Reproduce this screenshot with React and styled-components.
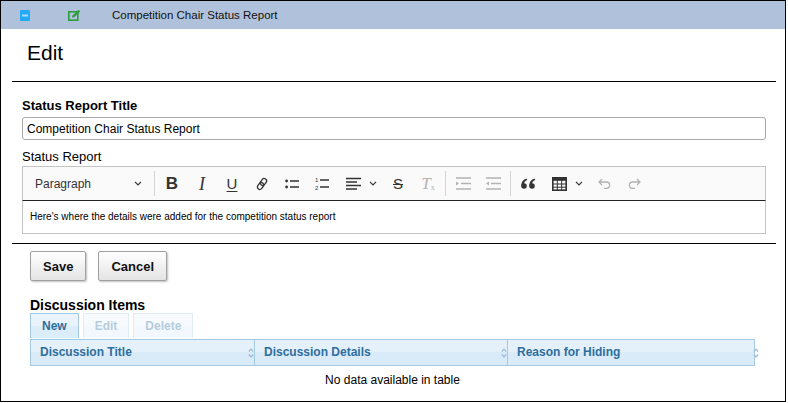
import React from "react";
import styled, { createGlobalStyle } from "styled-components";

const GlobalStyle = createGlobalStyle`
  body {
    margin: 0;
    background: #fff;
    font-family: "Liberation Sans", Arial, sans-serif;
    color: #000;
  }
`;

const Frame = styled.div`
  box-sizing: border-box;
  width: 786px;
  height: 402px;
  border: 1px solid #000;
  overflow: hidden;
  background: #fff;
`;

const TitleBar = styled.div`
  display: flex;
  align-items: center;
  height: 28px;
  padding-left: 19px;
  background: #b0c1dc;
  font-size: 11.5px;
  color: #111;
`;

const BarIcon = styled.svg`
  display: block;
  margin-right: ${(p) => p.$gap}px;
`;

const Body = styled.div`
  padding: 0 9px 0 11px;
`;

const PageTitle = styled.h1`
  margin: 12px 0 0;
  padding-left: 15px;
  font-size: 21px;
  line-height: 24px;
  font-weight: normal;
`;

const Rule = styled.div`
  margin-top: ${(p) => p.$top}px;
  border-top: 1px solid #000;
`;

const Form = styled.div`
  padding: 0 10px;
`;

const Label = styled.div`
  margin-top: ${(p) => p.$top}px;
  font-size: 13px;
  line-height: 16px;
  font-weight: ${(p) => (p.$bold ? "bold" : "normal")};
`;

const TextInput = styled.input`
  display: block;
  box-sizing: border-box;
  width: 100%;
  height: 23px;
  margin-top: 3px;
  padding: 0 4px;
  border: 1px solid #a9a9a9;
  border-radius: 3px;
  font-family: inherit;
  font-size: 12px;
  color: #000;
  outline: none;
`;

const Editor = styled.div`
  margin-top: 1px;
`;

const Toolbar = styled.div`
  display: flex;
  align-items: center;
  box-sizing: border-box;
  height: 35px;
  border: 1px solid #c4c4c4;
  border-bottom-color: #222;
  background: #fafafa;
`;

const Dropdown = styled.div`
  display: flex;
  align-items: center;
  justify-content: space-between;
  box-sizing: border-box;
  width: 129px;
  padding: 0 10px 0 12px;
  font-size: 12px;
  color: #333;
`;

const Separator = styled.div`
  width: 1px;
  height: 25px;
  margin: 0 2px;
  background: #d4d4d4;
`;

const ToolButton = styled.div`
  display: flex;
  align-items: center;
  justify-content: ${(p) => (p.$split ? "flex-start" : "center")};
  gap: ${(p) => (p.$split ? 8 : 0)}px;
  box-sizing: border-box;
  width: ${(p) => p.$width || 30}px;
  padding-left: ${(p) => (p.$split ? 9 : 0)}px;
  height: 26px;
  color: ${(p) => (p.$off ? "#b3b3b3" : "#333")};
`;

const Glyph = styled.span`
  font-family: ${(p) => (p.$serif ? '"Liberation Serif", serif' : '"Liberation Sans", Arial, sans-serif')};
  font-size: ${(p) => p.$size || 17}px;
  font-weight: ${(p) => (p.$bold ? "bold" : "normal")};
  font-style: ${(p) => (p.$italic ? "italic" : "normal")};
  text-decoration: ${(p) => p.$deco || "none"};
  text-decoration-thickness: 1px;
  text-underline-offset: 2px;
  line-height: 1;
`;

const Sub = styled.sub`
  font-size: 8px;
  font-style: normal;
  vertical-align: -1px;
`;

const Content = styled.div`
  box-sizing: border-box;
  height: 33px;
  padding-left: 7px;
  border: 1px solid #c4c4c4;
  border-top: none;
  font-size: 10px;
  line-height: 32px;
`;

const Actions = styled.div`
  display: flex;
  gap: 12px;
  margin-top: 7px;
  padding-left: 18px;
`;

const Button = styled.button`
  height: 30px;
  padding: 0 12px;
  border: 1px solid #a0a0a0;
  border-radius: 2px;
  background: linear-gradient(#ffffff, #e4e4e4);
  box-shadow: 1px 1px 2px rgba(0, 0, 0, 0.25);
  font-family: inherit;
  font-size: 13px;
  font-weight: bold;
  color: #111;
`;

const Section = styled.div`
  padding-left: 18px;
`;

const SectionTitle = styled.h3`
  margin: 16px 0 0;
  font-size: 14px;
  line-height: 16px;
  font-weight: bold;
`;

const DtButtons = styled.div`
  display: flex;
  gap: 4px;
`;

const DtButton = styled.div`
  box-sizing: border-box;
  height: 25px;
  padding: 0 11px;
  border: 1px solid #a6c9e2;
  border-bottom: none;
  background: linear-gradient(#e8f3fc 50%, #dcedfa 50%);
  font-size: 12px;
  font-weight: bold;
  line-height: 25px;
  color: #2e6e9e;
  opacity: ${(p) => (p.$disabled ? 0.35 : 1)};
`;

const Table = styled.div`
  width: 725px;
  margin-top: 1px;
`;

const HeadRow = styled.div`
  display: grid;
  grid-template-columns: 223px 253px 249px;
  box-sizing: border-box;
  height: 27px;
  border: 1px solid #a6c9e2;
  background: linear-gradient(#e4f1fb 50%, #d9ebf9 50%);
`;

const HeadCell = styled.div`
  position: relative;
  padding-left: ${(p) => (p.$first ? 9 : 9)}px;
  border-left: ${(p) => (p.$first ? "none" : "1px solid #a6c9e2")};
  font-size: 12px;
  font-weight: bold;
  line-height: 25px;
  color: #2e6e9e;
`;

const SortMark = styled.svg`
  position: absolute;
  right: ${(p) => (p.$last ? -3 : 0)}px;
  top: 8px;
`;

const EmptyRow = styled.div`
  height: 28px;
  font-size: 12px;
  line-height: 28px;
  text-align: center;
`;

const Chevron = () => (
  <svg width="8" height="5" viewBox="0 0 8 5" fill="none" stroke="#333" strokeWidth="1.2">
    <path d="M1 0.8 L4 3.8 L7 0.8" />
  </svg>
);

const Icon = ({ children, w = 15, h = 15 }) => (
  <svg width={w} height={h} viewBox={`0 0 ${w} ${h}`} fill="none" stroke="currentColor" strokeWidth="1.3">
    {children}
  </svg>
);

const Sort = ({ last }) => (
  <SortMark $last={last} width="6" height="10" viewBox="0 0 6 10" fill="none" stroke="#9bb8d3" strokeWidth="1.2">
    <path d="M0.8 3.5 L3 1.2 L5.2 3.5 M0.8 6.5 L3 8.8 L5.2 6.5" />
  </SortMark>
);

export default function App() {
  return (
    <>
      <GlobalStyle />
      <Frame>
        <TitleBar>
          <BarIcon $gap={38} width="10" height="11" viewBox="0 0 10 11">
            <rect x="0" y="0" width="10" height="11" rx="1" fill="#22a9f8" />
            <rect x="2" y="4.5" width="6" height="2" fill="#a8defc" />
          </BarIcon>
          <BarIcon $gap={31} width="13" height="12" viewBox="0 0 13 12">
            <rect x="0.8" y="2.8" width="9" height="8.4" fill="none" stroke="#2e9c3c" strokeWidth="1.6" />
            <path d="M4 8.5 L4.5 6.5 L10.5 0.8 L12.2 2.5 L6.2 8.2 Z" fill="#2e9c3c" />
          </BarIcon>
          <span>Competition Chair Status Report</span>
        </TitleBar>

        <Body>
          <PageTitle>Edit</PageTitle>
          <Rule $top={16} />

          <Form>
            <Label $top={16} $bold>Status Report Title</Label>
            <TextInput defaultValue="Competition Chair Status Report" />

            <Label $top={9}>Status Report</Label>
            <Editor>
              <Toolbar>
                <Dropdown>
                  <span>Paragraph</span>
                  <Chevron />
                </Dropdown>
                <Separator />
                <ToolButton><Glyph $bold $size={17}>B</Glyph></ToolButton>
                <ToolButton><Glyph $serif $italic $size={18}>I</Glyph></ToolButton>
                <ToolButton><Glyph $size={15} $deco="underline">U</Glyph></ToolButton>
                <ToolButton>
                  <Icon w={14} h={14}>
                    <g transform="rotate(-55 7 7)">
                      <rect x="0.8" y="4.6" width="7.4" height="4.8" rx="2.4" />
                      <rect x="5.8" y="4.6" width="7.4" height="4.8" rx="2.4" />
                    </g>
                  </Icon>
                </ToolButton>
                <ToolButton>
                  <Icon w={14} h={12}>
                    <circle cx="1.6" cy="3" r="1.4" fill="currentColor" stroke="none" />
                    <circle cx="1.6" cy="9" r="1.4" fill="currentColor" stroke="none" />
                    <path d="M5 3 H14 M5 9 H14" strokeWidth="1.5" />
                  </Icon>
                </ToolButton>
                <ToolButton>
                  <Icon w={14} h={13}>
                    <text x="0" y="5" fontSize="6" fontFamily="Liberation Sans, Arial, sans-serif" fill="currentColor" stroke="none">1</text>
                    <text x="0" y="12.5" fontSize="6" fontFamily="Liberation Sans, Arial, sans-serif" fill="currentColor" stroke="none">2</text>
                    <path d="M5 3 H14 M5 10 H14" strokeWidth="1.5" />
                  </Icon>
                </ToolButton>
                <ToolButton $split $width={46}>
                  <Icon w={15} h={13}>
                    <path d="M0 1.5 H15 M0 5 H11 M0 8.5 H15 M0 12 H11" strokeWidth="1.3" />
                  </Icon>
                  <Chevron />
                </ToolButton>
                <ToolButton><Glyph $size={15} $deco="line-through">S</Glyph></ToolButton>
                <ToolButton $off>
                  <Glyph $serif $italic $size={17}>T<Sub>x</Sub></Glyph>
                </ToolButton>
                <Separator />
                <ToolButton $off>
                  <Icon w={15} h={13}>
                    <path d="M0 1 H15 M5 6.5 H15 M0 12 H15" strokeWidth="1.3" />
                    <path d="M0 4.5 L3 6.5 L0 8.5 Z" fill="currentColor" stroke="none" />
                  </Icon>
                </ToolButton>
                <ToolButton $off>
                  <Icon w={15} h={13}>
                    <path d="M0 1 H15 M5 6.5 H15 M0 12 H15" strokeWidth="1.3" />
                    <path d="M3 4.5 L0 6.5 L3 8.5 Z" fill="currentColor" stroke="none" />
                  </Icon>
                </ToolButton>
                <Separator />
                <ToolButton>
                  <Icon w={15} h={11}>
                    <g fill="currentColor" stroke="none">
                      <circle cx="3" cy="8" r="2.8" />
                      <path d="M0.3 7.6 C0.3 4 2.2 1.6 5.6 0.6 L6.2 2 C4 2.9 3 4.6 3 6.4 Z" />
                      <circle cx="11" cy="8" r="2.8" />
                      <path d="M8.3 7.6 C8.3 4 10.2 1.6 13.6 0.6 L14.2 2 C12 2.9 11 4.6 11 6.4 Z" />
                    </g>
                  </Icon>
                </ToolButton>
                <ToolButton $split $width={46}>
                  <Icon w={15} h={14}>
                    <rect x="0.8" y="0.8" width="13.4" height="12.4" strokeWidth="1.6" />
                    <rect x="0.8" y="0.8" width="13.4" height="3" fill="currentColor" stroke="none" />
                    <path d="M5.3 1 V13 M9.7 1 V13 M1 7 H14 M1 10.2 H14" strokeWidth="1" />
                  </Icon>
                  <Chevron />
                </ToolButton>
                <ToolButton $off>
                  <Icon w={13} h={11}>
                    <path d="M4 1 L1 4 L4 7 M1 4 H8.5 A3.2 3.2 0 0 1 8.5 10.4 H6" strokeWidth="1.3" />
                  </Icon>
                </ToolButton>
                <ToolButton $off>
                  <Icon w={13} h={11}>
                    <path d="M9 1 L12 4 L9 7 M12 4 H4.5 A3.2 3.2 0 0 0 4.5 10.4 H7" strokeWidth="1.3" />
                  </Icon>
                </ToolButton>
              </Toolbar>
              <Content>Here's where the details were added for the competition status report</Content>
            </Editor>
          </Form>

          <Rule $top={9} />

          <Actions>
            <Button>Save</Button>
            <Button>Cancel</Button>
          </Actions>

          <Section>
            <SectionTitle>Discussion Items</SectionTitle>
            <DtButtons>
              <DtButton>New</DtButton>
              <DtButton $disabled>Edit</DtButton>
              <DtButton $disabled>Delete</DtButton>
            </DtButtons>
            <Table>
              <HeadRow>
                <HeadCell $first>
                  Discussion Title
                  <Sort />
                </HeadCell>
                <HeadCell>
                  Discussion Details
                  <Sort />
                </HeadCell>
                <HeadCell>
                  Reason for Hiding
                  <Sort last />
                </HeadCell>
              </HeadRow>
              <EmptyRow>No data available in table</EmptyRow>
            </Table>
          </Section>
        </Body>
      </Frame>
    </>
  );
}
